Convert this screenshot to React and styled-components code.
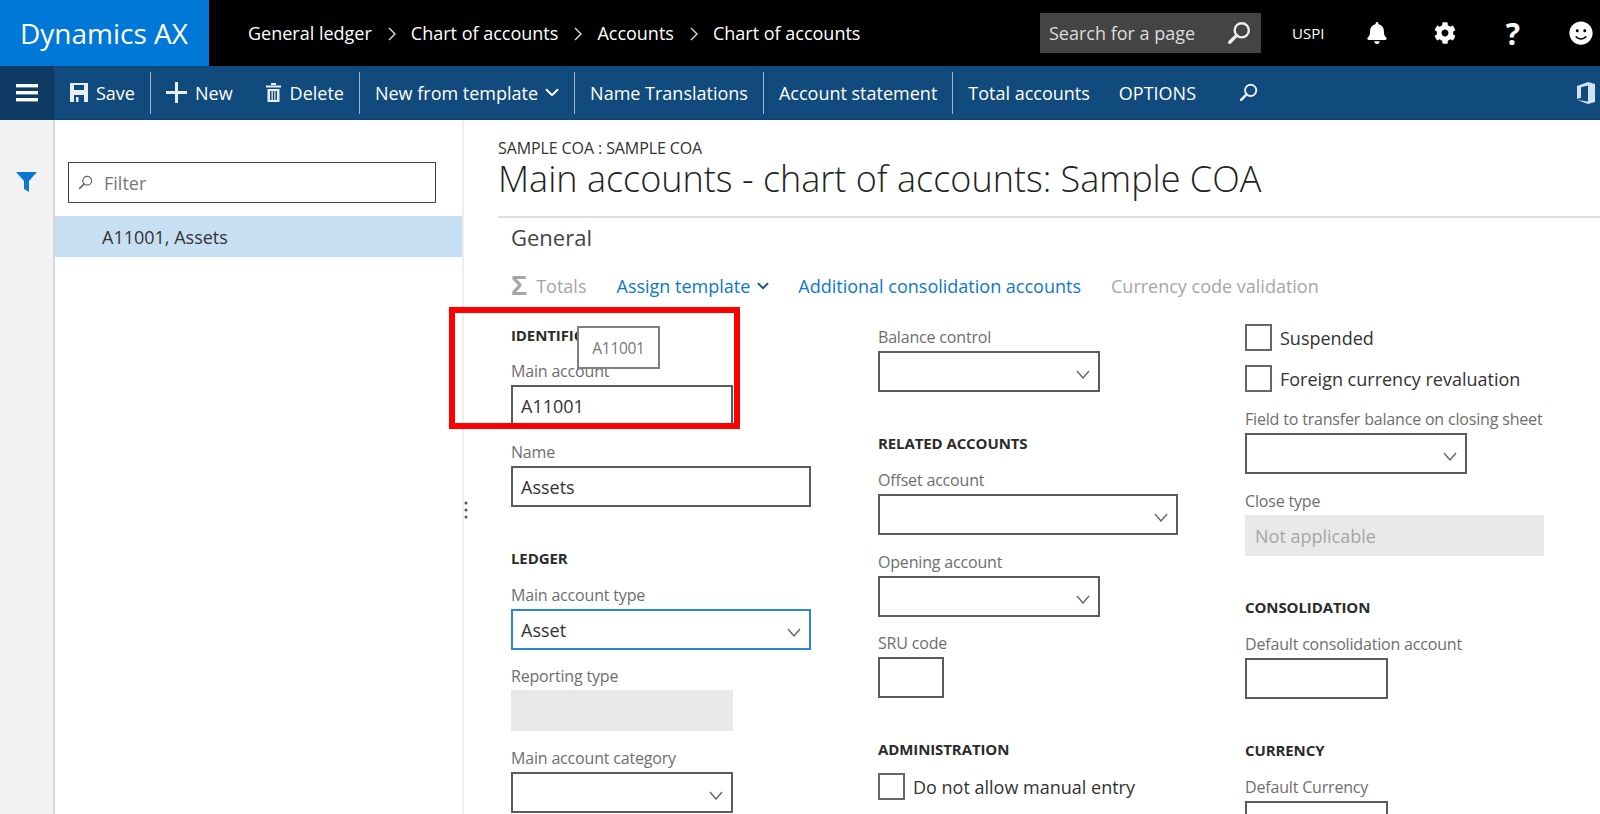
import React from 'react';
import styled, { createGlobalStyle } from 'styled-components';
import { FaBell, FaCog, FaSmile } from 'react-icons/fa';

const Global = createGlobalStyle`
    html, body {
        margin: 0;
        height: 814px;
        overflow: hidden;
        background: #fff;
        font-family: "Open Sans", "Noto Sans", sans-serif;
    }
    * { box-sizing: border-box; }
`;

const Page = styled.div`
    position: relative;
    width: 1600px;
    height: 814px;
    overflow: hidden;
    display: flex;
    flex-direction: column;
`;

const TopBar = styled.header`
    height: 66px;
    flex: none;
    background: #000;
    color: #fff;
    display: flex;
    align-items: center;
`;
const Brand = styled.div`
    width: 209px;
    height: 100%;
    background: #0078d7;
    font-size: 28px;
    padding-left: 20px;
    display: flex;
    align-items: center;
`;
const Crumbs = styled.nav`
    display: flex;
    align-items: center;
    margin-left: 39px;
    font-size: 18px;
    flex: 1;
`;
const CrumbSep = styled.svg`
    width: 10px;
    height: 14px;
    margin: 2px 14px 0 15px;
`;
const SearchBox = styled.div`
    width: 221px;
    height: 40px;
    background: #444;
    color: #ddd;
    font-size: 18px;
    padding: 0 10px 0 9px;
    display: flex;
    align-items: center;
    justify-content: space-between;
`;
const User = styled.span`
    font-size: 15px;
    margin-left: 31px;
    width: 34px;
`;
const TopIcon = styled.span`
    width: 68px;
    display: flex;
    justify-content: center;
    font-size: ${(p) => p.size || 22}px;
    font-weight: ${(p) => (p.bold ? 700 : 400)};
    margin-left: ${(p) => p.offset || 0}px;
    margin-right: ${(p) => p.trail || 0}px;
`;

const CommandBar = styled.div`
    height: 54px;
    flex: none;
    background: #114a7c;
    border-bottom: 1px solid #0e3f6c;
    color: #fff;
    display: flex;
    align-items: center;
    font-size: 18px;
`;
const MenuCell = styled.div`
    width: 54px;
    height: 100%;
    background: #0e3a63;
    display: flex;
    align-items: center;
    justify-content: center;
`;
const Command = styled.div`
    height: 42px;
    display: flex;
    align-items: center;
    gap: ${(p) => p.gap || 8}px;
    padding: 0 ${(p) => p.right ?? 15}px 0 ${(p) => p.left ?? 15}px;
    border-left: ${(p) => (p.sep ? '1.5px solid #a3b6c9' : 'none')};
    white-space: nowrap;
`;
const OfficeWrap = styled.div`
    margin-left: auto;
    margin-right: 5px;
    display: flex;
`;

const Body = styled.div`
    flex: 1;
    display: flex;
    min-height: 0;
`;
const Rail = styled.aside`
    width: 55px;
    flex: none;
    background: #f2f2f2;
    border-right: 2px solid #d6d6d6;
    padding: 52px 0 0 16px;
`;
const ListPane = styled.section`
    width: 409px;
    flex: none;
    border-right: 2px solid #eee;
    padding-top: 42px;
`;
const FilterBox = styled.div`
    width: 368px;
    height: 41px;
    margin-left: 13px;
    border: 1.5px solid #444;
    display: flex;
    align-items: center;
    gap: 11px;
    padding-left: 9px;
    font-size: 18px;
    color: #777;
`;
const ListRow = styled.div`
    margin-top: 13px;
    height: 41px;
    background: #c7dff3;
    color: #333;
    font-size: 18px;
    padding-left: 47px;
    display: flex;
    align-items: center;
`;

const Main = styled.main`
    flex: 1;
    padding: 18px 0 0 34px;
    min-width: 0;
`;
const Eyebrow = styled.div`
    font-size: 16px;
    line-height: 20px;
    letter-spacing: -0.1px;
    color: #333;
`;
const Title = styled.h1`
    margin: 0;
    font-size: 36px;
    line-height: 42px;
    font-weight: 300;
    color: #222;
    white-space: nowrap;
`;
const Divider = styled.hr`
    margin: 16px 0 0;
    border: none;
    height: 2px;
    background: #ddd;
`;
const Section = styled.div`
    padding-left: 13px;
`;
const SectionTitle = styled.div`
    margin-top: 4px;
    font-size: 22px;
    line-height: 30px;
    color: #444;
`;
const ActionRow = styled.div`
    margin-top: 22px;
    height: 24px;
    display: flex;
    align-items: center;
    font-size: 18px;
`;
const Action = styled.span`
    color: ${(p) => (p.disabled ? '#a6a6a6' : '#0b78d0')};
    margin-left: ${(p) => p.offset || 0}px;
    display: flex;
    align-items: center;
    gap: 7px;
    white-space: nowrap;
`;
const Sigma = styled.span`
    font-family: "Liberation Sans", sans-serif;
    font-size: 27px;
    font-weight: 700;
    line-height: 24px;
    color: #a6a6a6;
    margin-right: 2px;
`;

const FormGrid = styled.div`
    display: grid;
    grid-template-columns: 367px 367px 1fr;
    padding-top: 26px;
`;
const Column = styled.div`
    padding-top: ${(p) => p.top || 0}px;
`;
const Heading = styled.div`
    margin-top: ${(p) => p.top ?? 41}px;
    font-size: 15px;
    line-height: 20px;
    font-weight: 700;
    letter-spacing: -0.1px;
    color: #2b2b2b;
`;
const FieldWrap = styled.div`
    margin-top: ${(p) => p.top ?? 17}px;
`;
const Label = styled.div`
    font-size: 16px;
    line-height: 20px;
    letter-spacing: -0.18px;
    color: #6e6e6e;
    margin-bottom: 4px;
    white-space: nowrap;
`;
const Box = styled.div`
    width: ${(p) => p.width}px;
    height: 41px;
    border: ${(p) => (p.disabled ? 'none' : p.focus ? '2px solid #2b88d8' : '2px solid #5c5c5c')};
    background: ${(p) => (p.disabled ? '#e9e9e9' : '#fff')};
    color: ${(p) => (p.disabled ? '#a6a6a6' : '#333')};
    padding-left: ${(p) => (p.disabled ? 10 : 8)}px;
    padding-right: 8px;
    font-size: 18px;
    display: flex;
    align-items: center;
    justify-content: space-between;
`;
const CheckRow = styled.div`
    margin-top: ${(p) => p.top ?? 14}px;
    display: flex;
    align-items: center;
    gap: 8px;
    font-size: 18px;
    color: #333;
`;
const CheckBox = styled.span`
    width: 27px;
    height: 27px;
    border: 2px solid #666;
    background: #fff;
`;

const Highlight = styled.div`
    position: absolute;
    left: 449px;
    top: 307px;
    width: 291px;
    height: 122px;
    border: 6px solid #fe0000;
    pointer-events: none;
`;
const Tooltip = styled.div`
    position: absolute;
    left: 577px;
    top: 326px;
    width: 83px;
    height: 43px;
    border: 2px solid #808080;
    background: #fff;
    color: #777;
    font-size: 15.5px;
    letter-spacing: -0.3px;
    display: flex;
    align-items: center;
    justify-content: center;
`;
const Grip = styled.svg`
    position: absolute;
    left: 463px;
    top: 500px;
    width: 6px;
    height: 20px;
`;

const Magnifier = ({ size = 22, color = '#fff', width = 2.2 }) => (
    <svg width={size} height={size} viewBox="0 0 22 22" fill="none" stroke={color} strokeWidth={width}>
        <circle cx="13.5" cy="8.5" r="6.5" />
        <line x1="8.8" y1="13.2" x2="2.5" y2="19.5" strokeWidth={width * 1.4} strokeLinecap="round" />
    </svg>
);
const Chevron = ({ size = 14, color = '#fff', width = 2 }) => (
    <svg width={size} height={size * 0.6} viewBox="0 0 14 8" fill="none" stroke={color} strokeWidth={width}>
        <polyline points="1,1 7,7 13,1" />
    </svg>
);
const SelectArrow = () => (
    <svg width="14" height="9" viewBox="0 0 14 9" fill="none" stroke="#666" strokeWidth="1.4" style={{ marginTop: 6 }}>
        <polyline points="1,1 7,8 13,1" />
    </svg>
);
const Sep = () => (
    <CrumbSep viewBox="0 0 10 14" fill="none" stroke="#ddd" strokeWidth="1.4">
        <polyline points="2,1 8,7 2,13" />
    </CrumbSep>
);

const Field = ({ label, width, arrow, value, top, focus, disabled }) => (
    <FieldWrap top={top}>
        <Label>{label}</Label>
        <Box width={width} focus={focus} disabled={disabled}>
            <span>{value}</span>
            {arrow && <SelectArrow />}
        </Box>
    </FieldWrap>
);

const App = () => (
    <Page>
        <Global />
        <TopBar>
            <Brand>Dynamics AX</Brand>
            <Crumbs>
                General ledger
                <Sep />
                Chart of accounts
                <Sep />
                Accounts
                <Sep />
                Chart of accounts
            </Crumbs>
            <SearchBox>
                Search for a page
                <Magnifier size={24} color="#eee" />
            </SearchBox>
            <User>USPI</User>
            <TopIcon offset={17}>
                <FaBell />
            </TopIcon>
            <TopIcon>
                <FaCog />
            </TopIcon>
            <TopIcon size={30} bold>
                ?
            </TopIcon>
            <TopIcon size={24} trail={-15}>
                <FaSmile />
            </TopIcon>
        </TopBar>

        <CommandBar>
            <MenuCell>
                <svg width="22" height="18" viewBox="0 0 22 18" fill="#fff">
                    <rect width="22" height="3.4" />
                    <rect y="7" width="22" height="3.4" />
                    <rect y="14" width="22" height="3.4" />
                </svg>
            </MenuCell>
            <Command left={16}>
                <svg width="18" height="19" viewBox="0 0 18 19" fill="#e8eef4">
                    <path d="M0 0h18v19H14v-7H4v7H0zM4 2v5h10V2z" fillRule="evenodd" />
                    <rect x="6" y="14" width="2.5" height="5" />
                </svg>
                Save
            </Command>
            <Command sep gap={8} right={33}>
                <svg width="21" height="21" viewBox="0 0 21 21" fill="#e8eef4">
                    <rect x="9" width="3" height="21" />
                    <rect y="9" width="21" height="3" />
                </svg>
                New
            </Command>
            <Command gap={9} left={0}>
                <svg width="15" height="19" viewBox="0 0 15 19" fill="#e8eef4">
                    <rect x="5" width="5" height="2" />
                    <rect y="2.5" width="15" height="2" />
                    <path d="M1.5 6h12v13h-12zM4 8v9h1.5V8zM6.8 8v9h1.5V8zM9.5 8v9H11V8z" fillRule="evenodd" />
                </svg>
                Delete
            </Command>
            <Command sep gap={7}>
                New from template
                <Chevron />
            </Command>
            <Command sep>Name Translations</Command>
            <Command sep>Account statement</Command>
            <Command sep right={29}>
                Total accounts
            </Command>
            <Command left={0} right={43}>
                OPTIONS
            </Command>
            <Command left={0}>
                <Magnifier size={19} color="#e8eef4" />
            </Command>
            <OfficeWrap>
                <svg width="18" height="22" viewBox="0 0 18 22">
                    <path d="M0 4 11 0l7 2v18l-7 2-11-4 11 1.500V3.500L4 5.200v10.600L0 17z" fill="#cfe3f3" />
                </svg>
            </OfficeWrap>
        </CommandBar>

        <Body>
            <Rail>
                <svg width="21" height="20" viewBox="0 0 21 20" fill="#0b78d0">
                    <path d="M0 0h21l-8 9v11l-5-3V9z" />
                </svg>
            </Rail>
            <ListPane>
                <FilterBox>
                    <Magnifier size={15} color="#666" width={1.8} />
                    Filter
                </FilterBox>
                <ListRow>A11001, Assets</ListRow>
            </ListPane>
            <Main>
                <Eyebrow>SAMPLE COA : SAMPLE COA</Eyebrow>
                <Title>Main accounts - chart of accounts: Sample COA</Title>
                <Divider />
                <Section>
                    <SectionTitle>General</SectionTitle>
                    <ActionRow>
                        <Action disabled>
                            <Sigma>Σ</Sigma>
                            Totals
                        </Action>
                        <Action offset={30}>
                            Assign template
                            <Chevron size={12} color="#114a7c" />
                        </Action>
                        <Action offset={29}>Additional consolidation accounts</Action>
                        <Action disabled offset={30}>
                            Currency code validation
                        </Action>
                    </ActionRow>
                    <FormGrid>
                        <Column top={1}>
                            <Heading top={0}>IDENTIFICATION</Heading>
                            <Field top={16} label="Main account" width={222} value="A11001" />
                            <Field top={16} label="Name" width={300} value="Assets" />
                            <Heading>LEDGER</Heading>
                            <Field label="Main account type" width={300} value="Asset" arrow focus />
                            <Field top={16} label="Reporting type" width={222} disabled />
                            <Field label="Main account category" width={222} arrow />
                        </Column>
                        <Column top={3}>
                            <Field top={0} label="Balance control" width={222} arrow />
                            <Heading>RELATED ACCOUNTS</Heading>
                            <Field label="Offset account" width={300} arrow />
                            <Field label="Opening account" width={222} arrow />
                            <Field top={16} label="SRU code" width={66} />
                            <Heading>ADMINISTRATION</Heading>
                            <CheckRow>
                                <CheckBox />
                                Do not allow manual entry
                            </CheckRow>
                        </Column>
                        <Column>
                            <CheckRow top={0}>
                                <CheckBox />
                                Suspended
                            </CheckRow>
                            <CheckRow>
                                <CheckBox />
                                Foreign currency revaluation
                            </CheckRow>
                            <Field label="Field to transfer balance on closing sheet" width={222} arrow />
                            <Field label="Close type" width={299} value="Not applicable" disabled />
                            <Heading>CONSOLIDATION</Heading>
                            <Field label="Default consolidation account" width={143} />
                            <Heading>CURRENCY</Heading>
                            <Field label="Default Currency" width={143} />
                        </Column>
                    </FormGrid>
                </Section>
            </Main>
        </Body>

        <Highlight />
        <Tooltip>A11001</Tooltip>
        <Grip viewBox="0 0 6 20" fill="#555">
            <circle cx="3" cy="3" r="1.5" />
            <circle cx="3" cy="10" r="1.5" />
            <circle cx="3" cy="17" r="1.5" />
        </Grip>
    </Page>
);

export default App;
